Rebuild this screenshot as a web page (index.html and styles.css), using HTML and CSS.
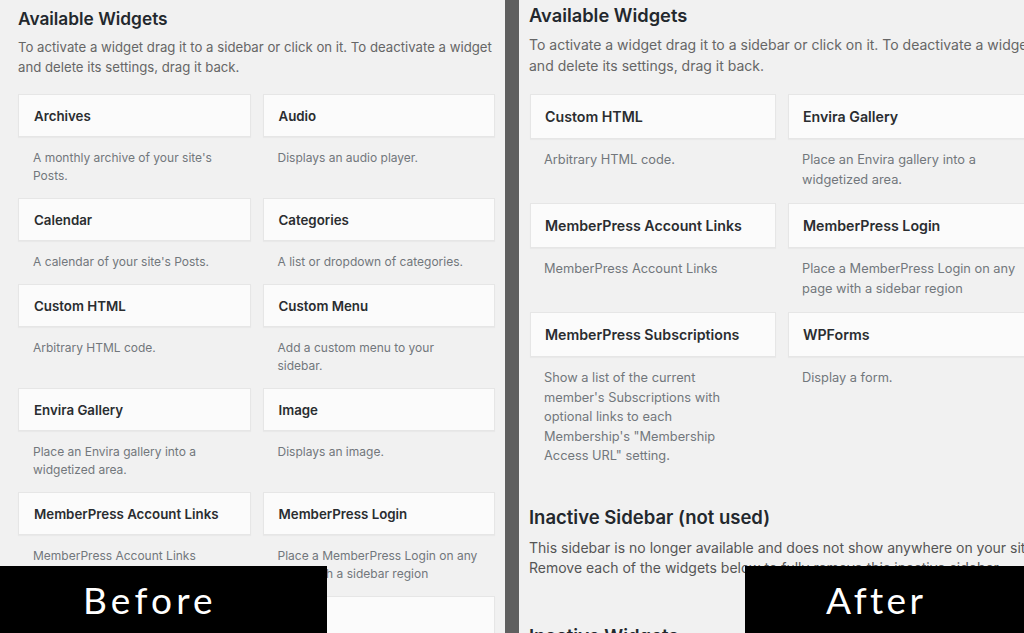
FILE: index.html
```html
<!DOCTYPE html>
<html lang="en">
<head>
<meta charset="utf-8">
<title>Available Widgets – Before / After</title>
<link rel="stylesheet" href="styles.css">
</head>
<body>
<div class="compare">
  <section class="panel before">
    <h2 class="title">Available Widgets</h2>
    <p class="intro">To activate a widget drag it to a sidebar or click on it. To deactivate a widget<br>and delete its settings, drag it back.</p>
    <div class="grid">
      <div class="widget"><div class="widget-title">Archives</div><div class="widget-desc">A monthly archive of your site's<br>Posts.</div></div>
      <div class="widget"><div class="widget-title">Audio</div><div class="widget-desc">Displays an audio player.</div></div>
      <div class="widget"><div class="widget-title">Calendar</div><div class="widget-desc">A calendar of your site's Posts.</div></div>
      <div class="widget"><div class="widget-title">Categories</div><div class="widget-desc">A list or dropdown of categories.</div></div>
      <div class="widget"><div class="widget-title">Custom HTML</div><div class="widget-desc">Arbitrary HTML code.</div></div>
      <div class="widget"><div class="widget-title">Custom Menu</div><div class="widget-desc">Add a custom menu to your<br>sidebar.</div></div>
      <div class="widget"><div class="widget-title">Envira Gallery</div><div class="widget-desc">Place an Envira gallery into a<br>widgetized area.</div></div>
      <div class="widget"><div class="widget-title">Image</div><div class="widget-desc">Displays an image.</div></div>
      <div class="widget"><div class="widget-title">MemberPress Account Links</div><div class="widget-desc">MemberPress Account Links</div></div>
      <div class="widget"><div class="widget-title">MemberPress Login</div><div class="widget-desc">Place a MemberPress Login on any<br>page with a sidebar region</div></div>
      <div class="widget"><div class="widget-title">MemberPress Subscriptions</div><div class="widget-desc">Show a list of the current</div></div>
      <div class="widget"><div class="widget-title">Meta</div><div class="widget-desc">Login, RSS, &amp; WordPress.org links.</div></div>
    </div>
    <div class="label">Before</div>
  </section>
  <div class="divider"></div>
  <section class="panel after">
    <h2 class="title">Available Widgets</h2>
    <p class="intro">To activate a widget drag it to a sidebar or click on it. To deactivate a widget<br>and delete its settings, drag it back.</p>
    <div class="grid">
      <div class="widget"><div class="widget-title">Custom HTML</div><div class="widget-desc">Arbitrary HTML code.</div></div>
      <div class="widget"><div class="widget-title">Envira Gallery</div><div class="widget-desc">Place an Envira gallery into a<br>widgetized area.</div></div>
      <div class="widget"><div class="widget-title">MemberPress Account Links</div><div class="widget-desc">MemberPress Account Links</div></div>
      <div class="widget"><div class="widget-title">MemberPress Login</div><div class="widget-desc">Place a MemberPress Login on any<br>page with a sidebar region</div></div>
      <div class="widget"><div class="widget-title">MemberPress Subscriptions</div><div class="widget-desc">Show a list of the current<br>member's Subscriptions with<br>optional links to each<br>Membership's "Membership<br>Access URL" setting.</div></div>
      <div class="widget"><div class="widget-title">WPForms</div><div class="widget-desc">Display a form.</div></div>
    </div>
    <h2 class="section-title">Inactive Sidebar (not used)</h2>
    <p class="section-desc">This sidebar is no longer available and does not show anywhere on your site.<br>Remove each of the widgets below to fully remove this inactive sidebar.</p>
    <h2 class="section-title lower">Inactive Widgets</h2>
    <div class="label">After</div>
  </section>
</div>
</body>
</html>
```
FILE: styles.css
```css
* { box-sizing: border-box; }
html, body {
  margin: 0;
  padding: 0;
  width: 1024px;
  height: 633px;
  overflow: hidden;
  background: #f1f1f1;
  font-family: Inter, "Liberation Sans", Arial, sans-serif;
}
.compare {
  display: flex;
  width: 1024px;
  height: 633px;
}
.panel {
  position: relative;
  background: #f1f1f1;
  overflow: hidden;
  white-space: nowrap;
}
.before {
  width: 505px;
  padding: 7px 10px 0 18px;
}
.divider {
  width: 14px;
  background: #5f5f5f;
  flex: none;
}
.after {
  flex: 1;
  padding: 3px 0 0 10px;
}
.title {
  margin: 0;
  font-weight: 600;
  color: #23282d;
}
.before .title { font-size: 17.3px; line-height: 24px; }
.after .title { font-size: 18.3px; line-height: 25px; }
.intro {
  margin: 0;
  color: #666;
}
.before .intro { margin-top: 6px; font-size: 13.2px; line-height: 20px; }
.after .intro { margin-top: 7px; font-size: 14px; line-height: 20.5px; }
.grid {
  display: grid;
  column-gap: 12px;
}
.before .grid { margin-top: 17px; grid-template-columns: 1fr 1fr; }
.after .grid { margin-top: 18px; padding-left: 1px; grid-template-columns: 246px 246px; }
.widget {
  display: flex;
  flex-direction: column;
}
.widget-title {
  display: flex;
  align-items: center;
  background: #fbfbfb;
  border: 1px solid #e6e6e6;
  box-shadow: 0 1px 1px rgba(0,0,0,0.03);
  font-weight: 600;
  color: #2a2d30;
}
.before .widget-title { height: 43px; padding: 0 15px; font-size: 13.3px; }
.after .widget-title { height: 45px; padding: 0 14px; font-size: 14.2px; }
.widget-desc {
  color: #72777c;
}
.before .widget-desc { padding: 12px 15px 13px; font-size: 12px; line-height: 18px; }
.after .widget-desc { padding: 11px 14px 14px; font-size: 12.8px; line-height: 19.5px; }
.section-title {
  margin: 24px 0 0;
  font-size: 18.5px;
  line-height: 26px;
  font-weight: 600;
  color: #23282d;
}
.section-title.lower { margin-top: 45px; }
.section-desc {
  margin: 8px 0 0;
  font-size: 14px;
  line-height: 20px;
  color: #555;
}
.label {
  position: absolute;
  bottom: 0;
  height: 67px;
  display: flex;
  align-items: center;
  padding-left: 83px;
  background: #000;
  color: #fff;
  font-family: Lato, "Open Sans", sans-serif;
  font-size: 37px;
  letter-spacing: 4.2px;
}
.before .label { left: 0; width: 327px; }
.after .label { right: 0; width: 279px; padding-left: 81px; letter-spacing: 3.4px; }
```
